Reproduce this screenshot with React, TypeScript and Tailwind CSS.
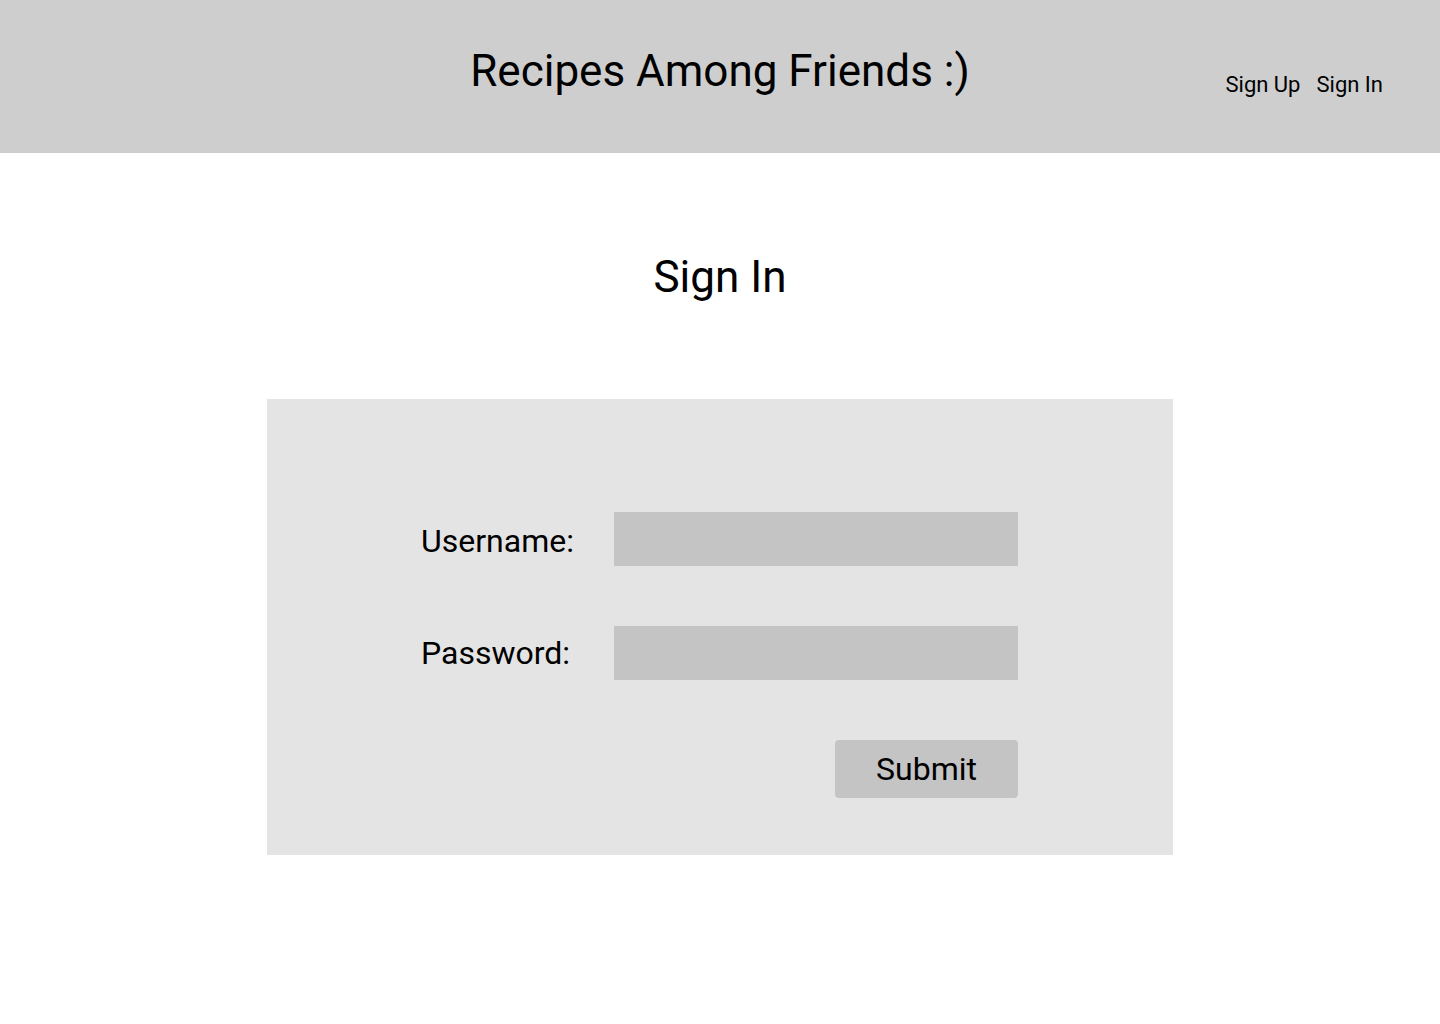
import React, { useState } from "react";

export default function App() {
  const [username, setUsername] = useState("");
  const [password, setPassword] = useState("");

  const handleSubmit = (e: React.FormEvent) => {
    e.preventDefault();
  };

  return (
    <div className="min-h-[1024px] bg-white text-black font-['Roboto',sans-serif]">
      {/* Header */}
      <header className="grid h-[153px] grid-cols-[1fr_auto_1fr] bg-[#cecece]">
        <div />
        <h1 className="pt-[45px] text-[44px] font-normal leading-[52px]">
          Recipes Among Friends :)
        </h1>
        <nav className="flex justify-end gap-4 pr-[57px] pt-[71px] text-[22px] leading-[28px]">
          <a href="#" className="h-fit">
            Sign Up
          </a>
          <a href="#" className="h-fit">
            Sign In
          </a>
        </nav>
      </header>

      {/* Main */}
      <main className="flex flex-col items-center pt-[98px]">
        <h2 className="text-[44px] font-normal leading-[52px]">Sign In</h2>

        <form
          onSubmit={handleSubmit}
          className="mt-[96px] flex h-[456px] w-[906px] flex-col items-start bg-[#e4e4e4] pl-[154px] pt-[113px]"
        >
          <div className="flex w-[597px] flex-col gap-[60px]">
            <label className="flex h-[54px] items-center">
              <span className="w-[193px] pt-[4px] text-[32px] leading-[54px]">
                Username:
              </span>
              <input
                type="text"
                value={username}
                onChange={(e) => setUsername(e.target.value)}
                className="h-[54px] w-[404px] bg-[#c4c4c4] px-3 text-[24px] outline-none"
              />
            </label>
            <label className="flex h-[54px] items-center">
              <span className="w-[193px] text-[32px] leading-[54px]">
                Password:
              </span>
              <input
                type="password"
                value={password}
                onChange={(e) => setPassword(e.target.value)}
                className="h-[54px] w-[404px] bg-[#c4c4c4] px-3 text-[24px] outline-none"
              />
            </label>
            <div className="flex justify-end">
              <button
                type="submit"
                className="h-[58px] w-[183px] rounded bg-[#c4c4c4] text-[32px] leading-[58px]"
              >
                Submit
              </button>
            </div>
          </div>
        </form>
      </main>
    </div>
  );
}
